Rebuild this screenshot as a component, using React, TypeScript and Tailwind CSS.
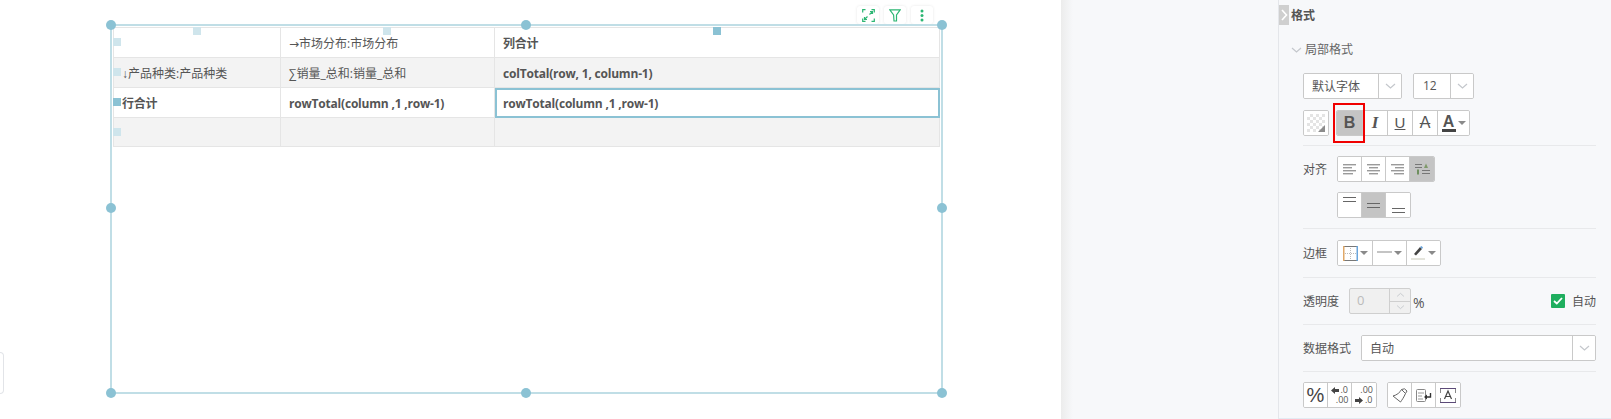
import React from "react";

const FONT = "font-['Open_Sans','Noto_Sans_CJK_SC',sans-serif]";

const Chevron = ({ className = "" }: { className?: string }) => (
  <svg width="11" height="7" viewBox="0 0 11 7" fill="none" className={className}>
    <path d="M1 1 L5.5 5 L10 1" stroke="#c4c7cc" strokeWidth="1.2" />
  </svg>
);

const Caret = () => (
  <svg width="8" height="4" viewBox="0 0 8 4" className="shrink-0">
    <path d="M0 0 H8 L4 4 Z" fill="#8a8a8a" />
  </svg>
);

const Lines = ({ kind }: { kind: "l" | "c" | "r" }) => {
  const pts: [number, number][] =
    kind === "l" ? [[0, 13], [0, 9], [0, 13], [0, 10]] : kind === "c" ? [[0, 13], [2, 9], [0, 13], [2, 9]] : [[0, 13], [4, 9], [0, 13], [3, 10]];
  return (
    <svg width="13" height="11" viewBox="0 0 13 11">
      {pts.map(([x, w], i) => (
        <rect key={i} x={x} y={i * 3} width={w} height="1.4" fill="#9a9a9a" />
      ))}
    </svg>
  );
};

const Btn = ({ w = "w-[24px]", active = false, children }: { w?: string; active?: boolean; children?: React.ReactNode }) => (
  <div className={`${w} h-full flex items-center justify-center border-r last:border-r-0 border-[#c9c9c9] ${active ? "bg-[#c4c4c4]" : "bg-white"}`}>
    {children}
  </div>
);

const Group = ({ children, className = "" }: { children: React.ReactNode; className?: string }) => (
  <div className={`flex h-[26px] border border-[#c9c9c9] rounded-[2px] overflow-hidden ${className}`}>{children}</div>
);

const Divider = ({ className = "" }: { className?: string }) => <div className={`h-px bg-[#e8e9eb] ${className}`} />;

const Side = ({ className }: { className: string }) => <div className={`absolute w-[8px] h-[8px] ${className}`} />;

const Dot = ({ className }: { className: string }) => (
  <div className={`absolute w-[10px] h-[10px] rounded-full bg-[#8bc2d4] ${className}`} />
);

const Cell = ({ bold, gray, children }: { bold?: boolean; gray?: boolean; children?: React.ReactNode }) => (
  <div
    className={`flex items-center pl-[8px] pt-[2px] border-r border-b border-[#e5e5e5] text-[12px] text-[#555] whitespace-nowrap ${bold ? "font-bold tracking-[-0.2px]" : ""} ${gray ? "bg-[#f3f3f3]" : "bg-white"}`}
  >
    {children}
  </div>
);

const ToolBtn = ({ children }: { children: React.ReactNode }) => (
  <div className="w-[22px] h-[18px] bg-white rounded-[3px] shadow-[0_0_3px_rgba(0,0,0,0.1)] flex items-center justify-center">
    {children}
  </div>
);

const Label = ({ w, children }: { w: string; children: React.ReactNode }) => (
  <div className={`${w} flex items-center pt-[2px] text-[#555]`}>{children}</div>
);

export default function App() {
  return (
    <div className={`${FONT} flex w-[1611px] h-[419px] overflow-hidden bg-white text-[12px] text-[#555]`}>
      {/* canvas */}
      <div className="relative w-[1061px] h-full shrink-0">
        <div className="absolute left-0 top-[352px] w-[4px] h-[42px] bg-white border border-l-0 border-[#e2e4e8] rounded-r-[4px]" />

        <div className="absolute left-[857px] top-[6px] flex gap-[5px]">
          <ToolBtn>
            <svg width="13" height="13" viewBox="0 0 13 13" fill="none" stroke="#2cb673" strokeWidth="1.2">
              <path d="M0.7 3.5 V0.7 H3.5 M9.5 0.7 H12.3 V3.5 M12.3 9.5 V12.3 H9.5 M3.5 12.3 H0.7 V9.5" />
              <path d="M7.5 5.5 L10.5 2.5 M8 2.5 H10.5 V5 M5.5 7.5 L2.5 10.5 M2.5 8 V10.5 H5" />
            </svg>
          </ToolBtn>
          <ToolBtn>
            <svg width="12" height="13" viewBox="0 0 12 13" fill="none" stroke="#2cb673" strokeWidth="1.2">
              <path d="M0.8 0.8 H11.2 L7.5 6 V12 H5 L4.6 6 Z" />
            </svg>
          </ToolBtn>
          <ToolBtn>
            <svg width="4" height="13" viewBox="0 0 4 13" fill="#2cb673">
              <circle cx="2" cy="2" r="1.5" />
              <circle cx="2" cy="6.5" r="1.5" />
              <circle cx="2" cy="11" r="1.5" />
            </svg>
          </ToolBtn>
        </div>

        <div className="absolute left-[110px] top-[24px] w-[833px] h-[370px] border-2 border-[#c0dee6] pl-px pt-px">
          <div className="grid grid-cols-[167px_214px_445px] grid-rows-[30px_30px_30px_29px] border-t border-l border-[#e5e5e5] w-[827px]">
            <Cell />
            <Cell><span className="font-['DejaVu_Sans'] text-[12px]">→</span>市场分布:市场分布</Cell>
            <Cell bold>列合计</Cell>
            <Cell gray><span className="font-['Liberation_Sans'] text-[12px]">↓</span>产品种类:产品种类</Cell>
            <Cell gray>∑销量_总和:销量_总和</Cell>
            <Cell gray bold>colTotal(row, 1, column-1)</Cell>
            <Cell bold>行合计</Cell>
            <Cell bold>rowTotal(column ,1 ,row-1)</Cell>
            <div className="flex items-center pl-[6px] pt-[1px] border-2 border-[#8bc2d4] bg-white font-bold tracking-[-0.2px] text-[12px] text-[#555] whitespace-nowrap">
              rowTotal(column ,1 ,row-1)
            </div>
            <Cell gray />
            <Cell gray />
            <Cell gray />
          </div>

          <Side className="left-[81px] top-[1px] bg-[#cfe5ec]" />
          <Side className="left-[271px] top-[1px] bg-[#cfe5ec]" />
          <Side className="left-[601px] top-[1px] bg-[#8bc2d4]" />
          <Side className="left-[1px] top-[12px] bg-[#cfe5ec]" />
          <Side className="left-[1px] top-[42px] bg-[#cfe5ec]" />
          <Side className="left-[1px] top-[72px] bg-[#8bc2d4]" />
          <Side className="left-[1px] top-[102px] bg-[#cfe5ec]" />

          <Dot className="-left-[6px] -top-[6px]" />
          <Dot className="left-[409px] -top-[6px]" />
          <Dot className="-right-[6px] -top-[6px]" />
          <Dot className="-left-[6px] top-[177px]" />
          <Dot className="-right-[6px] top-[177px]" />
          <Dot className="-left-[6px] -bottom-[6px]" />
          <Dot className="left-[409px] -bottom-[6px]" />
          <Dot className="-right-[6px] -bottom-[6px]" />
        </div>
      </div>

      {/* gutter */}
      <div className="w-[217px] h-[418.5px] shrink-0 bg-[#f7f8fa] bg-gradient-to-r from-[#ececec] to-[#f7f8fa] bg-[length:12px_100%] bg-no-repeat" />

      {/* panel */}
      <div className="relative w-[333px] h-[418.5px] shrink-0 bg-[#f7f8fa] border-l border-b border-l-[#e4e6ea] border-b-[#e3ebf3] pl-[24px] pr-[15px]">
        <div className="absolute left-0 top-[5px] w-[10px] h-[20px] bg-[#cfcfcf] flex items-center justify-center">
          <svg width="7" height="12" viewBox="0 0 7 12" fill="none">
            <path d="M1 1 L5.5 6 L1 11" stroke="#fff" strokeWidth="1.6" />
          </svg>
        </div>

        <div className="h-[30px] flex items-center pt-[2px] -ml-[12px] font-semibold text-[#555]">格式</div>

        <div className="mt-[10px] h-[20px] flex items-center gap-[3px] -ml-[12px] text-[#666]">
          <Chevron />
          <span>局部格式</span>
        </div>

        <div className="mt-[13px] h-[26px] flex gap-[11px]">
          <Group className="w-[99px]">
            <div className="flex-1 flex items-center pl-[8px] pt-[2px] bg-white border-r border-[#c9c9c9] text-[#555]">默认字体</div>
            <div className="w-[22px] bg-white flex items-center justify-center">
              <Chevron />
            </div>
          </Group>
          <Group className="w-[61px]">
            <div className="flex-1 flex items-center pl-[9px] bg-white border-r border-[#c9c9c9] text-[#555]">12</div>
            <div className="w-[22px] bg-white flex items-center justify-center">
              <Chevron />
            </div>
          </Group>
        </div>

        <div className="mt-[11px] h-[26px] flex gap-[7px] relative">
          <Group className="w-[26px]">
            <div className="w-full h-full bg-white p-[3px]">
              <svg width="18" height="18" viewBox="0 0 18 18">
                <rect width="18" height="18" fill="#e4e4e4" />
                {[0, 6, 12].map((x) =>
                  [0, 6, 12].map((y) => (
                    <g key={`${x}-${y}`}>
                      <rect x={x} y={y} width="3" height="3" fill="#fff" />
                      <rect x={x + 3} y={y + 3} width="3" height="3" fill="#fff" />
                    </g>
                  ))
                )}
                <path d="M18 11 V18 H11 Z" fill="#8c8c8c" />
              </svg>
            </div>
          </Group>
          <Group>
            <Btn w="w-[26px]" active>
              <span className="font-['Liberation_Sans'] font-bold text-[16px] text-[#555]">B</span>
            </Btn>
            <Btn w="w-[25px]">
              <span className="font-['Liberation_Serif'] font-bold italic text-[17px] text-[#555]">I</span>
            </Btn>
            <Btn w="w-[25px]">
              <span className="font-['Liberation_Sans'] underline text-[15px] text-[#555]">U</span>
            </Btn>
            <Btn w="w-[25px]">
              <span className="font-['Liberation_Sans'] line-through text-[16px] text-[#555]">A</span>
            </Btn>
            <Btn w="w-[31px]">
              <div className="flex items-center gap-[2px]">
                <div className="w-[14px] flex flex-col items-center">
                  <span className="font-['Liberation_Sans'] font-bold text-[16px] leading-[14px] text-[#555]">A</span>
                  <div className="w-[14px] h-[3px] bg-[#444]" />
                </div>
                <Caret />
              </div>
            </Btn>
          </Group>
          <div className="absolute left-[30px] -top-[7px] w-[32px] h-[40px] border-2 border-[#f00000]" />
        </div>

        <Divider className="mt-[9px]" />

        <div className="mt-[10px] h-[26px] flex">
          <Label w="w-[34px]">对齐</Label>
          <Group>
            <Btn><Lines kind="l" /></Btn>
            <Btn><Lines kind="c" /></Btn>
            <Btn><Lines kind="r" /></Btn>
            <Btn active>
              <svg width="15" height="12" viewBox="0 0 15 12">
                <rect x="0" y="1" width="7" height="1" fill="#777" />
                <rect x="0" y="4" width="7" height="1" fill="#777" />
                <path d="M9 5 L11 0.5 L13 5 Z" fill="#7f9a6a" />
                <rect x="7" y="7" width="8" height="1" fill="#777" />
                <rect x="7" y="10" width="8" height="1" fill="#777" />
                <rect x="2" y="6.5" width="2" height="5" fill="#6f8f5f" />
              </svg>
            </Btn>
          </Group>
        </div>

        <div className="mt-[10px] h-[26px] flex pl-[34px]">
          <Group>
            <Btn>
              <svg width="13" height="18" viewBox="0 0 13 18" fill="#666"><rect y="1" width="13" height="1" /><rect y="5" width="13" height="1" /></svg>
            </Btn>
            <Btn active>
              <svg width="13" height="18" viewBox="0 0 13 18" fill="#666"><rect y="7" width="13" height="1" /><rect y="11" width="13" height="1" /></svg>
            </Btn>
            <Btn>
              <svg width="13" height="18" viewBox="0 0 13 18" fill="#666"><rect y="12" width="13" height="1" /><rect y="16" width="13" height="1" /></svg>
            </Btn>
          </Group>
        </div>

        <Divider className="mt-[10px]" />

        <div className="mt-[11px] h-[26px] flex">
          <Label w="w-[34px]">边框</Label>
          <Group>
            <Btn w="w-[35px]">
              <div className="flex items-center gap-[2px]">
                <svg width="15" height="15" viewBox="0 0 15 15" fill="none">
                  <path d="M7.5 2 V13 M2 7.5 H13" stroke="#bbb" strokeDasharray="1 1" />
                  <path d="M0.5 0.5 H14.5 M0.5 14.5 H14.5" stroke="#777" />
                  <path d="M0.75 0 V15" stroke="#e0a868" strokeWidth="1.5" />
                  <path d="M14.25 0 V15" stroke="#6aa5dc" strokeWidth="1.5" />
                </svg>
                <Caret />
              </div>
            </Btn>
            <Btn w="w-[34px]">
              <div className="flex items-center gap-[2px]">
                <div className="w-[15px] h-[2px] bg-[#c4c4c4] -mt-[3px]" />
                <Caret />
              </div>
            </Btn>
            <Btn w="w-[33px]">
              <div className="flex items-center gap-[3px]">
                <svg width="14" height="14" viewBox="0 0 14 14">
                  <path d="M3 8 L9 1 L11 3 L5 9.5 Z" fill="#444" />
                  <path d="M9 1 L10.5 0 L12 1.5 L11 3 Z" fill="#6aa5dc" />
                  <rect x="0" y="12" width="14" height="2" fill="#e4e4dc" />
                </svg>
                <Caret />
              </div>
            </Btn>
          </Group>
        </div>

        <Divider className="mt-[11px]" />

        <div className="mt-[10px] h-[26px] flex items-center">
          <div className="w-[46px] pt-[2px] text-[#555]">透明度</div>
          <div className="w-[62px] h-full flex border border-[#cfcfcf] rounded-[2px] bg-[#f0f0f0]">
            <div className="w-[40px] flex items-center pl-[7px] border-r border-[#cfcfcf] text-[#bbb] text-[13px]">0</div>
            <div className="flex-1 flex flex-col">
              <div className="flex-1 flex items-center justify-center border-b border-[#cfcfcf]">
                <Chevron className="rotate-180 scale-75" />
              </div>
              <div className="flex-1 flex items-center justify-center">
                <Chevron className="scale-75" />
              </div>
            </div>
          </div>
          <span className="ml-[2px] pt-[2px] text-[14px] text-[#555]">%</span>
          <div className="ml-auto flex items-center gap-[7px]">
            <div className="w-[14px] h-[14px] rounded-[1px] bg-[#1fae5e] flex items-center justify-center">
              <svg width="10" height="8" viewBox="0 0 10 8" fill="none">
                <path d="M1 4 L3.8 6.5 L9 1" stroke="#fff" strokeWidth="1.8" />
              </svg>
            </div>
            <span className="pt-[2px] text-[#555]">自动</span>
          </div>
        </div>

        <Divider className="mt-[10px]" />

        <div className="mt-[10px] h-[26px] flex">
          <Label w="w-[58px]">数据格式</Label>
          <Group className="flex-1">
            <div className="flex-1 flex items-center pl-[8px] pt-[2px] bg-white border-r border-[#c9c9c9] text-[#555]">自动</div>
            <div className="w-[22px] bg-white flex items-center justify-center">
              <Chevron />
            </div>
          </Group>
        </div>

        <Divider className="mt-[10px]" />

        <div className="mt-[10px] h-[26px] flex gap-[10px]">
          <Group>
            <Btn>
              <span className="font-['Liberation_Sans'] text-[20px] leading-none text-[#444]">%</span>
            </Btn>
            <Btn>
              <div className="w-[18px] flex flex-col text-[9px] leading-[10px] text-[#555]">
                <div className="flex items-center gap-[2px]">
                  <svg width="8" height="7" viewBox="0 0 8 7"><path d="M0 3.5 L4 0 V2 H8 V5 H4 V7 Z" fill="#444" /></svg>
                  <span>.0</span>
                </div>
                <span className="text-right">.00</span>
              </div>
            </Btn>
            <Btn>
              <div className="w-[18px] flex flex-col text-[9px] leading-[10px] text-[#555]">
                <span className="text-right">.00</span>
                <div className="flex items-center gap-[2px]">
                  <svg width="8" height="7" viewBox="0 0 8 7"><path d="M8 3.5 L4 0 V2 H0 V5 H4 V7 Z" fill="#444" /></svg>
                  <span>.0</span>
                </div>
              </div>
            </Btn>
          </Group>
          <Group>
            <Btn>
              <svg width="16" height="15" viewBox="0 0 16 15" fill="none" stroke="#666">
                <path d="M1 8 C5 7 8 4.5 9.5 1.5 L13.5 5.5 C12 9 10 12 8.5 14 Z" />
                <path d="M9.5 1.5 L12.5 0.8 L15 3 L13.5 5.5" />
              </svg>
            </Btn>
            <Btn>
              <svg width="16" height="13" viewBox="0 0 16 13" fill="none">
                <rect x="0.5" y="0.5" width="9" height="12" rx="1" stroke="#888" />
                <path d="M2 4 H8 M2 7 H6 M2 10 H7" stroke="#999" />
                <path d="M14.5 4 V8 H9" stroke="#333" strokeWidth="1.4" />
                <path d="M8 8 L11 5.5 V10.5 Z" fill="#333" />
              </svg>
            </Btn>
            <Btn>
              <svg width="16" height="15" viewBox="0 0 16 15" fill="none">
                <path d="M0 0.5 H16 M0 14.5 H16" stroke="#5c4a78" />
                <path d="M0.5 1 V5 M0.5 10 V14 M15.5 1 V5 M15.5 10 V14" stroke="#888" />
                <path d="M4.5 11 L8 3 L11.5 11 M5.8 8.5 H10.2" stroke="#444" strokeWidth="1.2" />
              </svg>
            </Btn>
          </Group>
        </div>
      </div>
    </div>
  );
}
